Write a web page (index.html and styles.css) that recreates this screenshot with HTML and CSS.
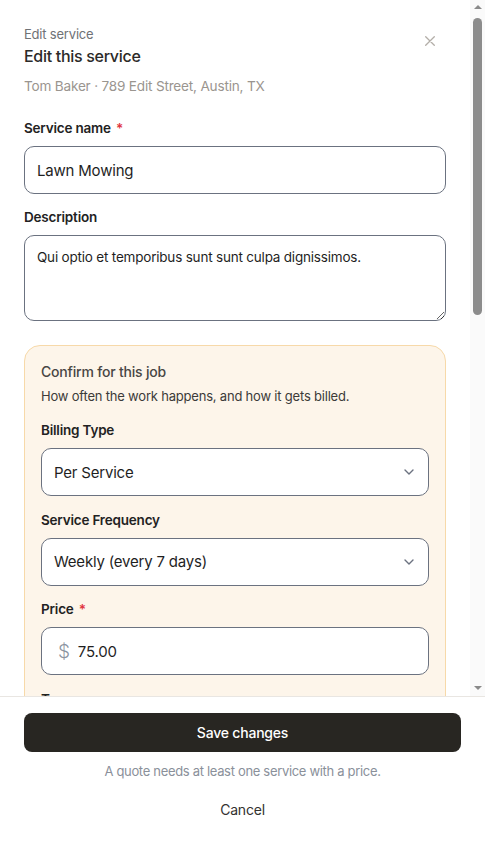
FILE: index.html
```html
<!DOCTYPE html>
<html lang="en">
<head>
<meta charset="utf-8">
<title>Edit service</title>
<link rel="stylesheet" href="styles.css">
</head>
<body>
<div class="panel">
  <div class="scroll-wrap">
    <div class="scroll">
      <header class="head">
        <div class="head-text">
          <div class="eyebrow">Edit service</div>
          <h1 class="title">Edit this service</h1>
        </div>
        <button class="close" aria-label="Close">
          <svg width="10" height="10" viewBox="0 0 10 10"><path d="M0.7 0.7L9.3 9.3M9.3 0.7L0.7 9.3" stroke="#b3aea8" stroke-width="1.3" stroke-linecap="round"/></svg>
        </button>
      </header>
      <p class="sub">Tom Baker · 789 Edit Street, Austin, TX</p>

      <div class="field first">
        <label class="label">Service name <span class="req">*</span></label>
        <div class="input">Lawn Mowing</div>
      </div>
      <div class="field">
        <label class="label">Description</label>
        <textarea class="textarea">Qui optio et temporibus sunt sunt culpa dignissimos.</textarea>
      </div>

      <section class="card">
        <div class="card-title">Confirm for this job</div>
        <div class="card-sub">How often the work happens, and how it gets billed.</div>
        <div class="field">
          <label class="label">Billing Type</label>
          <div class="input select"><span>Per Service</span>
            <svg class="chev" width="10" height="6" viewBox="0 0 10 6"><path d="M1 1L5 5L9 1" fill="none" stroke="#6b7280" stroke-width="1.4" stroke-linecap="round" stroke-linejoin="round"/></svg>
          </div>
        </div>
        <div class="field">
          <label class="label">Service Frequency</label>
          <div class="input select"><span>Weekly (every 7 days)</span>
            <svg class="chev" width="10" height="6" viewBox="0 0 10 6"><path d="M1 1L5 5L9 1" fill="none" stroke="#6b7280" stroke-width="1.4" stroke-linecap="round" stroke-linejoin="round"/></svg>
          </div>
        </div>
        <div class="field">
          <label class="label">Price <span class="req">*</span></label>
          <div class="input price"><span class="cur">$</span><span>75.00</span></div>
        </div>
        <div class="field">
          <label class="label">Taxes</label>
          <div class="input select"><span>No tax</span>
            <svg class="chev" width="10" height="6" viewBox="0 0 10 6"><path d="M1 1L5 5L9 1" fill="none" stroke="#6b7280" stroke-width="1.4" stroke-linecap="round" stroke-linejoin="round"/></svg>
          </div>
        </div>
        <div class="field">
          <label class="label">Start date</label>
          <div class="input">Mon, Jun 2</div>
        </div>
        <div class="field">
          <label class="label">Estimated duration</label>
          <div class="input">1 hour</div>
        </div>
      </section>

      <div class="field">
        <label class="label">Internal notes</label>
        <textarea class="textarea"></textarea>
      </div>
      <div class="field">
        <label class="label">Assigned crew</label>
        <div class="input select"><span>Unassigned</span>
          <svg class="chev" width="10" height="6" viewBox="0 0 10 6"><path d="M1 1L5 5L9 1" fill="none" stroke="#6b7280" stroke-width="1.4" stroke-linecap="round" stroke-linejoin="round"/></svg>
        </div>
      </div>
      <div class="field">
        <label class="label">Visit instructions</label>
        <textarea class="textarea"></textarea>
      </div>
      <div class="field">
        <label class="label">Materials</label>
        <textarea class="textarea"></textarea>
      </div>
      <div class="field">
        <label class="label">Tags</label>
        <div class="input">Residential</div>
      </div>
    </div>
    <div class="sbar" aria-hidden="true">
      <div class="sbar-btn"><span class="tri up"></span></div>
      <div class="sbar-track"><div class="sbar-thumb"></div></div>
      <div class="sbar-btn"><span class="tri down"></span></div>
    </div>
  </div>

  <footer class="foot">
    <button class="save">Save changes</button>
    <p class="hint">A quote needs at least one service with a price.</p>
    <button class="cancel">Cancel</button>
  </footer>
</div>
</body>
</html>
```

FILE: styles.css
```css
* { box-sizing: border-box; }
html, body { margin: 0; padding: 0; background: #ffffff; }
body {
  font-family: Inter, "Noto Sans", sans-serif;
  color: #1f1f1f;
  letter-spacing: -0.2px;
}
.panel {
  width: 485px;
  height: 845px;
  display: flex;
  flex-direction: column;
  background: #ffffff;
}
.scroll-wrap {
  flex: 1;
  min-height: 0;
  position: relative;
}
.scroll {
  height: 100%;
  overflow-y: auto;
  padding: 24px 39px 14px 24px;
}
/* decorative classic scrollbar drawn over the scroll area's right edge */
.sbar {
  position: absolute;
  top: 0;
  right: 0;
  bottom: 0;
  width: 15px;
  background: #fafafa;
  display: flex;
  flex-direction: column;
  pointer-events: none;
}
.sbar-btn {
  height: 15px;
  display: flex;
  align-items: center;
  justify-content: center;
}
.tri {
  width: 0;
  height: 0;
  border-left: 4.5px solid transparent;
  border-right: 4.5px solid transparent;
}
.tri.up { border-bottom: 4.5px solid #8a8a8a; margin-top: -1px; }
.tri.down { border-top: 4.5px solid #8a8a8a; margin-top: -2px; }
.sbar-track {
  flex: 1;
  display: flex;
  justify-content: center;
  padding-top: 3px;
}
.sbar-thumb {
  width: 9px;
  height: 297px;
  border-radius: 5px;
  background: #8c8c8c;
}
.head {
  display: flex;
  justify-content: space-between;
  align-items: flex-start;
}
.eyebrow {
  font-size: 13px;
  line-height: 20px;
  color: #6f7276;
}
.title {
  margin: 0;
  font-size: 16px;
  line-height: 24px;
  font-weight: 500;
  color: #2b2a28;
  letter-spacing: -0.3px;
}
.close {
  border: 0;
  background: none;
  padding: 0;
  margin: 12px 11px 0 0;
  width: 10px;
  height: 10px;
  display: flex;
}
.sub {
  margin: 8px 0 0;
  font-size: 13.6px;
  line-height: 20px;
  color: #9a958f;
}
.field { margin-top: 13px; display: flex; flex-direction: column; }
.field.first { margin-top: 22px; }
.label {
  font-size: 13.5px;
  line-height: 20px;
  font-weight: 600;
  color: #222222;
  margin-bottom: 8px;
}
.req { color: #e0323c; margin-left: 2px; }
.input {
  height: 48px;
  border: 1px solid #6b7280;
  border-radius: 10px;
  background: #ffffff;
  padding: 0 12px;
  display: flex;
  align-items: center;
  font-size: 15px;
  color: #1f1f1f;
}
.select { justify-content: space-between; }
.chev { margin-right: 2px; }
.price { padding-left: 16px; gap: 8px; }
.cur { color: #8b94a0; font-size: 19px; font-weight: 300; }
.textarea {
  height: 86px;
  border: 1px solid #6b7280;
  border-radius: 10px;
  padding: 11px 12px;
  font-family: inherit;
  font-size: 13.5px;
  line-height: 20px;
  letter-spacing: -0.2px;
  color: #1f1f1f;
  resize: vertical;
  background: #ffffff;
  display: block;
  width: 100%;
}
.card {
  margin-top: 24px;
  background: #fdf5ea;
  border: 1px solid #f7d9a9;
  border-radius: 16px;
  padding: 16px 16px 20px;
  margin-bottom: 10px;
}
.card-title {
  font-size: 14px;
  line-height: 20px;
  font-weight: 500;
  color: #484644;
}
.card-sub {
  margin-top: 4px;
  font-size: 13px;
  line-height: 20px;
  color: #3c3b39;
}
.card .field { margin-top: 13.5px; }
.card .card-sub + .field { margin-top: 14px; }
.foot {
  border-top: 1px solid #e9e6e2;
  padding: 16px 24px 18px;
  display: flex;
  flex-direction: column;
  align-items: stretch;
  background: #ffffff;
}
.save {
  height: 39px;
  border: 0;
  border-radius: 8px;
  background: #282622;
  color: #ffffff;
  font-family: inherit;
  font-size: 14px;
  font-weight: 500;
  letter-spacing: -0.2px;
}
.hint {
  margin: 9px 0 0;
  text-align: center;
  font-size: 13px;
  line-height: 20px;
  letter-spacing: -0.32px;
  color: #8a909a;
}
.cancel {
  margin-top: 10px;
  height: 36px;
  border: 0;
  background: none;
  font-family: inherit;
  font-size: 14px;
  letter-spacing: -0.2px;
  color: #333230;
}
```
